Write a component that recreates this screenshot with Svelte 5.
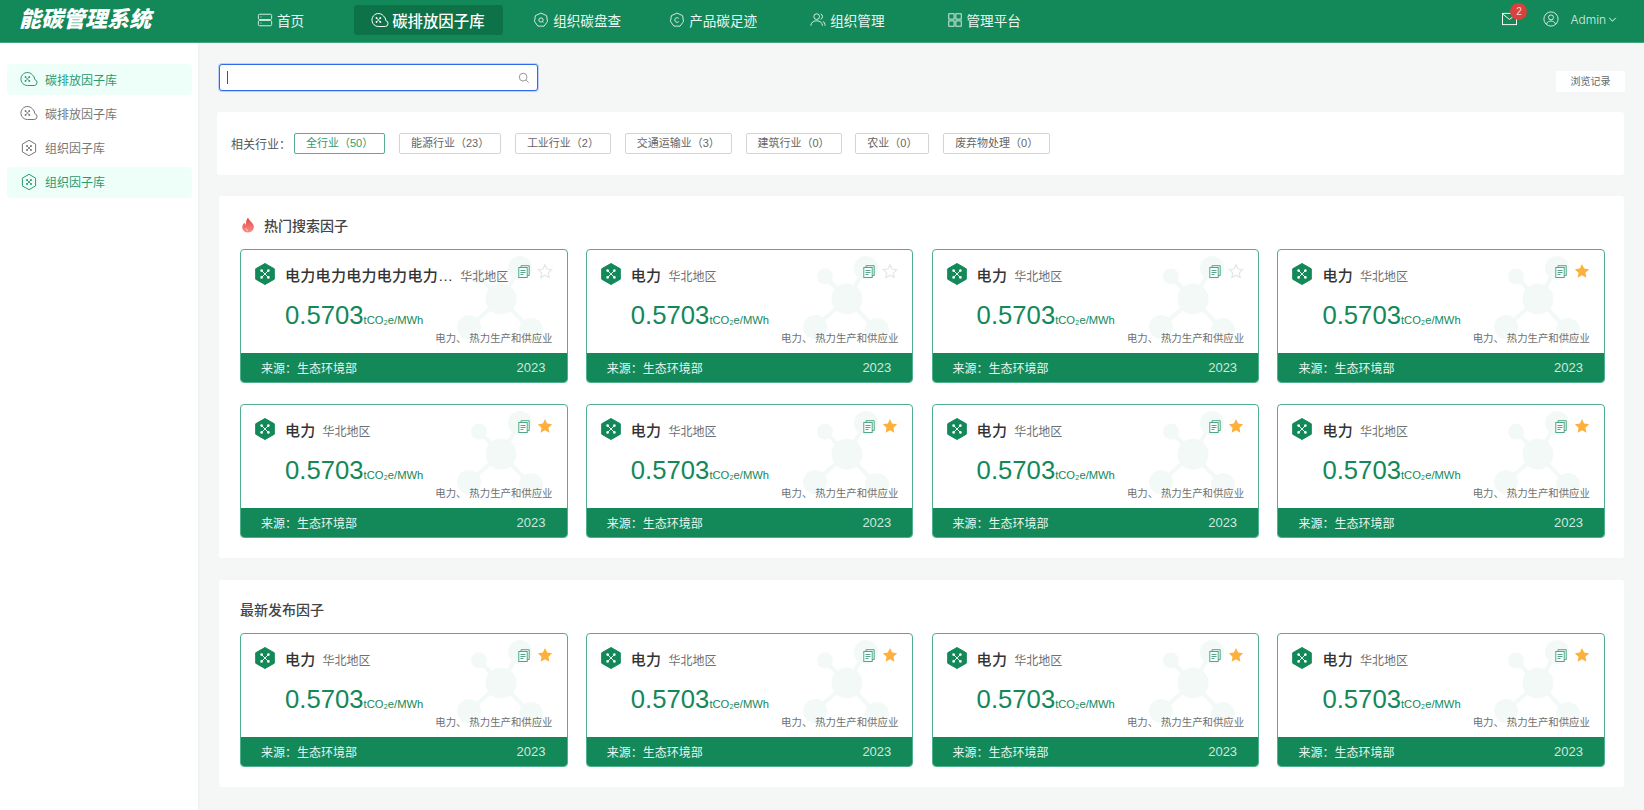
<script>
  const nav = [
    { label: '首页', icon: 'server' },
    { label: '碳排放因子库', icon: 'cloud', active: true },
    { label: '组织碳盘查', icon: 'hexq' },
    { label: '产品碳足迹', icon: 'hexc' },
    { label: '组织管理', icon: 'users' },
    { label: '管理平台', icon: 'grid' }
  ];
  const side = [
    { label: '碳排放因子库', icon: 'cloud', active: true },
    { label: '碳排放因子库', icon: 'cloud' },
    { label: '组织因子库', icon: 'hex' },
    { label: '组织因子库', icon: 'hex', active: true }
  ];
  const filters = ['全行业（50）', '能源行业（23）', '工业行业（2）', '交通运输业（3）', '建筑行业（0）', '农业（0）', '废弃物处理（0）'];
  const hot = [
    { title: '电力电力电力电力电力…', fav: false },
    { title: '电力', fav: false },
    { title: '电力', fav: false },
    { title: '电力', fav: true },
    { title: '电力', fav: true },
    { title: '电力', fav: true },
    { title: '电力', fav: true },
    { title: '电力', fav: true }
  ];
  const latest = [1, 2, 3, 4].map(() => ({ title: '电力', fav: true }));
</script>

{#snippet navIcon(name)}
  <svg class="ic" viewBox="0 0 18 18" fill="none" stroke="currentColor" stroke-width="1">
    {#if name === 'server'}
      <rect x="1.5" y="2.5" width="15" height="6" rx="1.5" /><rect x="1.5" y="9.5" width="15" height="6" rx="1.5" />
      <path d="M4 5.5h1M4 12.5h1" />
    {:else if name === 'cloud'}
      <path d="M12.400 4.800A6.500 6.500 0 1 0 7.500 15.500h6.700a3 3 0 0 0 .6-5.900 6.500 6.500 0 0 0-2.400-4.800z" />
      <path d="M5.500 7l3.800 4M9.300 7l-3.800 4" stroke-width=".8" />
      <circle cx="5.500" cy="7" r=".9" fill="currentColor" stroke="none" /><circle cx="9.300" cy="7" r=".9" fill="currentColor" stroke="none" /><circle cx="5.500" cy="11" r=".9" fill="currentColor" stroke="none" /><circle cx="9.300" cy="11" r=".9" fill="currentColor" stroke="none" />
    {:else if name === 'hex'}
      <path d="M9 1.300l6.600 3.800v7.800L9 16.700l-6.600-3.800V5.100z" stroke-linejoin="round" />
      <path d="M7 7l4 4M11 7l-4 4" stroke-width=".9" />
      <circle cx="7" cy="7" r="1" fill="currentColor" stroke="none" /><circle cx="11" cy="7" r="1" fill="currentColor" stroke="none" /><circle cx="7" cy="11" r="1" fill="currentColor" stroke="none" /><circle cx="11" cy="11" r="1" fill="currentColor" stroke="none" />
    {:else if name === 'hexq'}
      <path d="M9 1.200l6.300 2.900 1 6.500-3.800 5.300H5.500L1.700 10.600l1-6.500z" stroke-linejoin="round" />
      <circle cx="9" cy="9" r="2.400" /><path d="M10.600 10.600l1.200 1.200" />
    {:else if name === 'hexc'}
      <path d="M9 1.200l6.300 2.900 1 6.500-3.800 5.300H5.500L1.700 10.600l1-6.500z" stroke-linejoin="round" />
      <path d="M11 7.200a2.600 2.600 0 1 0 0 3.600" />
    {:else if name === 'users'}
      <circle cx="7.500" cy="5.200" r="3.200" /><path d="M1 15.500c0-3.600 2.800-5.600 6.500-5.600s6.500 2 6.500 5.600M12 2.200a3.200 3.200 0 0 1 0 6M14.500 10.500c1.500.8 2.500 2.500 2.500 5" />
    {:else if name === 'grid'}
      <rect x="2" y="2" width="6" height="6" /><rect x="10" y="2" width="6" height="6" /><rect x="2" y="10" width="6" height="6" /><rect x="10" y="10" width="6" height="6" />
    {/if}
  </svg>
{/snippet}

{#snippet card(c)}
  <article class="card">
    <div class="body">
      <svg class="mol" viewBox="0 0 110 100" fill="#f3f9f7" stroke="none">
        <path d="M29 26.500L51 49M70 18L51 49M19 77L51 49M81 80L51 49" stroke="#f3f9f7" stroke-width="4" />
        <circle cx="51" cy="49" r="15.500" /><circle cx="29" cy="26.500" r="8" /><circle cx="70" cy="18" r="12" /><circle cx="19" cy="77" r="12" /><circle cx="81" cy="80" r="12" />
      </svg>
      <div class="title-row">
        <svg class="hex" viewBox="0 0 20 22">
          <path d="M10 .5l9.300 5.300v10.400L10 21.500.7 16.200V5.800z" fill="#138859" stroke="#138859" stroke-linejoin="round" />
          <path d="M6.800 7.800l6.400 6.400M13.200 7.800l-6.400 6.400" stroke="#fff" stroke-width=".9" />
          <circle cx="6.600" cy="7.600" r="1.300" fill="#fff" /><circle cx="13.400" cy="7.600" r="1.300" fill="#fff" /><circle cx="6.600" cy="14.400" r="1.300" fill="#fff" /><circle cx="13.400" cy="14.400" r="1.300" fill="#fff" />
        </svg>
        <h3>{c.title}</h3>
        <span class="region">华北地区</span>
      </div>
      <div class="tools">
        <svg class="copy" viewBox="0 0 12 13" fill="none" stroke="#4fa784" stroke-width="1">
          <rect x=".8" y="2.500" width="8.400" height="10" fill="#fff" /><path d="M3 2.500V.7h8.200v9.800H9.200" /><path d="M2.500 5.500h5M2.500 7.500h5M2.500 9.500h3" />
        </svg>
        <svg class="star" viewBox="0 0 24 24">
          {#if c.fav}
            <path d="M12 1.500l3.200 6.900 7.500.9-5.500 5.200 1.400 7.500-6.600-3.700L5.400 22l1.400-7.500-5.500-5.200 7.500-.9z" fill="#fdb13c" />
          {:else}
            <path d="M12 2.500l3 6.500 7 .9-5.100 4.900 1.300 7-6.200-3.500-6.200 3.500 1.300-7L1.900 9.900l7-.9z" fill="#fff" stroke="#e6e6e6" stroke-width="1.800" />
          {/if}
        </svg>
      </div>
      <div class="value"><strong>0.5703</strong><span>tCO₂e/MWh</span></div>
      <p class="sector">电力、 热力生产和供应业</p>
    </div>
    <footer><span>来源：生态环境部</span><span class="year">2023</span></footer>
  </article>
{/snippet}

<div class="page">
  <header class="top">
    <div class="logo">能碳管理系统</div>
    <nav>
      {#each nav as n}
        <a class:on={n.active}>{@render navIcon(n.icon)}<span>{n.label}</span></a>
      {/each}
    </nav>
    <div class="user">
      <div class="mail">
        <svg viewBox="0 0 16 14" fill="none" stroke="#fff" stroke-width="1"><rect x=".5" y="1" width="15" height="12" /><path d="M.5 1.500L8 7.500l7.500-6" /></svg>
        <b>2</b>
      </div>
      <svg class="avatar" viewBox="0 0 18 18" fill="none" stroke="#e6f4ee" stroke-width="1"><circle cx="9" cy="9" r="8" /><circle cx="9" cy="7.200" r="2.800" /><path d="M3.800 14.800c1-2.500 3-3.500 5.200-3.500s4.200 1 5.200 3.500" /></svg>
      <span class="admin">Admin</span>
      <svg class="chev" viewBox="0 0 10 6" fill="none" stroke="#fff" stroke-width="1.200"><path d="M1 1l4 4 4-4" /></svg>
    </div>
  </header>

  <div class="layout">
    <aside>
      {#each side as s}
        <a class:on={s.active}>{@render navIcon(s.icon)}<span>{s.label}</span></a>
      {/each}
    </aside>

    <main>
      <div class="toolbar">
        <div class="search">
          <i class="caret"></i>
          <input aria-label="搜索" />
          <svg viewBox="0 0 14 14" fill="none" stroke="#888" stroke-width="1"><circle cx="6" cy="6" r="4.500" /><path d="M9.500 9.500l3 3" /></svg>
        </div>
        <button class="history">浏览记录</button>
      </div>

      <section class="filter">
        <span class="lbl">相关行业：</span>
        {#each filters as f, i}
          <button class:sel={i === 0}>{f}</button>
        {/each}
      </section>

      <section class="panel hot">
        <h2>
          <svg viewBox="0 0 14 16"><defs><linearGradient id="fl" x1="0" y1="0" x2="0" y2="1"><stop offset="0" stop-color="#e0483f" /><stop offset="1" stop-color="#fb8b8b" /></linearGradient></defs><path d="M7 .5c.8 3 4.200 4.500 5.500 7.500 1.300 3.800-1.500 7.500-5.500 7.500S.3 12 1.500 8.500c.5-1.300 1.300-2 2-2.800.2 1 .6 1.600 1.300 2C4.800 5 5.500 2.500 7 .5z" fill="url(#fl)" /><path d="M5 11.500c.2 1.200 1 1.800 2 1.900" stroke="#fff" fill="none" stroke-width=".8" /></svg>
          热门搜索因子
        </h2>
        <div class="grid">
          {#each hot as c}{@render card(c)}{/each}
        </div>
      </section>

      <section class="panel latest">
        <h2>最新发布因子</h2>
        <div class="grid">
          {#each latest as c}{@render card(c)}{/each}
        </div>
      </section>
    </main>
  </div>
</div>

<style>
  :global(body) { margin: 0; background: #f5f6f6; }
  .page { width: 1644px; height: 810px; overflow: hidden; font-family: "Liberation Sans", "Noto Sans CJK SC", sans-serif; color: #333; background: #f5f6f6; }
  .top { height: 43px; box-sizing: border-box; background: #138859; border-bottom: 1px solid #3fa67f; display: flex; align-items: flex-start; color: #fff; position: relative; }
  .logo { width: 236px; padding-left: 19px; box-sizing: border-box; font-size: 22px; line-height: 39px; font-weight: 900; font-style: italic; white-space: nowrap; }
  .top nav { display: flex; height: 42px; align-items: flex-start; }
  .top nav a { display: flex; align-items: center; height: 30px; margin-top: 5px; gap: 4px; font-size: 13.600px; color: #eaf6f1; border-radius: 3px; white-space: nowrap; }
  .top nav a .ic { width: 16px; height: 16px; flex: none; }
  .top nav a:nth-child(1) { margin-left: 21px; margin-right: 50px; }
  .top nav a.on { width: 149px; box-sizing: border-box; background: #0d7248; padding-left: 17px; gap: 3px; font-size: 15.400px; font-weight: 500; color: #fff; margin-right: 30px; }
  .top nav a.on .ic { width: 18px; height: 18px; }
  .top nav a:nth-child(3) { margin-right: 48px; }
  .top nav a:nth-child(4) { margin-right: 53px; }
  .top nav a:nth-child(5) { margin-right: 62px; }
  .user { margin-left: auto; display: flex; align-items: center; height: 38px; padding-right: 27px; }
  .mail { position: relative; width: 15px; height: 14px; margin-right: 26px; }
  .mail svg { width: 15px; height: 14px; display: block; }
  .mail b { position: absolute; left: 8px; top: -9px; width: 17px; height: 17px; border-radius: 50%; background: #d9413f; color: #ffd9d6; font: 400 10px/17px "Liberation Sans", sans-serif; text-align: center; }
  .avatar { width: 16px; height: 16px; margin-right: 11px; }
  .admin { font-family: Inter, "Liberation Sans", sans-serif; font-weight: 300; font-size: 12px; color: #d6efe4; }
  .chev { width: 9px; height: 5px; margin-left: 2px; }

  .layout { display: flex; height: 767px; }
  aside { width: 198px; flex: none; background: #fff; padding: 21px 6px 0 7px; box-sizing: border-box; display: flex; flex-direction: column; gap: 3.300px; box-shadow: 1px 0 2px rgba(0,0,0,.03); }
  aside a { height: 31px; border-radius: 4px; display: flex; align-items: center; padding: 0 0 1px 13px; box-sizing: border-box; gap: 7px; font-size: 12px; color: #777; }
  aside a.on { background: #eefffa; color: #2b9a6f; }
  aside a .ic { width: 18px; height: 18px; flex: none; }

  main { flex: 1; padding: 21px 20px 0 21px; box-sizing: border-box; min-width: 0; }
  .toolbar { display: flex; justify-content: space-between; align-items: flex-end; height: 27px; }
  .search { width: 319px; height: 27px; box-sizing: border-box; background: #fff; border: 1px solid #2f6bea; border-radius: 3px; box-shadow: 0 0 0 1px #bcd2fa; display: flex; align-items: center; padding: 0 7px; }
  .caret { width: 1px; height: 13px; background: #555; flex: none; }
  .search input { flex: 1; border: 0; outline: 0; background: transparent; min-width: 0; }
  .search svg { width: 12px; height: 12px; flex: none; }
  .history { width: 69px; height: 21px; border: 0; background: #fff; font: 10px/21px "Liberation Sans", "Noto Sans CJK SC", sans-serif; color: #666; border-radius: 2px; padding: 0; margin: 0 -1px -1px 0; }

  .filter { margin: 21px 0 0 -2px; height: 63px; background: #fff; border-radius: 3px; display: flex; align-items: center; padding-left: 14px; box-sizing: border-box; font-size: 12px; color: #555; }
  .lbl { width: 63px; flex: none; white-space: nowrap; }
  .filter button { height: 21px; padding: 0 11px; margin-right: 13.700px; border: 1px solid #d4d6d6; background: #fff; border-radius: 2px; font: 11px/19px "Liberation Sans", "Noto Sans CJK SC", sans-serif; color: #666; white-space: nowrap; flex: none; margin-top: -1px; }
  .filter button.sel { border-color: #58ad8b; color: #2f9a70; }

  .panel { background: #fff; border-radius: 3px; padding: 0 20px 0 21px; box-sizing: border-box; }
  .hot { margin-top: 21px; height: 362px; }
  .latest { margin-top: 22px; height: 207px; }
  h2 { margin: 0; height: 53px; display: flex; align-items: center; gap: 9px; font-size: 14px; font-weight: 500; color: #444; box-sizing: border-box; padding-top: 5px; }
  .hot h2 svg { width: 14px; height: 16px; margin-left: 1px; }
  .grid { display: grid; grid-template-columns: repeat(4, 327.500px); column-gap: 18.300px; row-gap: 21px; }

  .card { height: 134px; border: 1px solid #4fae8b; border-radius: 4px; overflow: hidden; box-sizing: border-box; display: flex; flex-direction: column; background: #fff; }
  .body { flex: 1; position: relative; padding: 13px 14px 0 14px; }
  .mol { position: absolute; left: 209px; top: 0; width: 110px; height: 100px; }
  .title-row { display: flex; align-items: center; position: relative; height: 22px; }
  .hex { width: 20px; height: 22px; flex: none; margin-right: 10px; }
  h3 { margin: 0; font-size: 15px; letter-spacing: .3px; font-weight: 500; color: #333; white-space: nowrap; }
  .region { font-size: 12px; color: #707070; margin-left: 7px; padding-top: 3px; white-space: nowrap; }
  .tools { position: absolute; top: 13px; right: 14px; display: flex; align-items: center; gap: 7px; }
  .copy { width: 12px; height: 13px; }
  .star { width: 16px; height: 16px; }
  .value { position: relative; margin: 15px 0 0 30px; display: flex; align-items: baseline; color: #138859; line-height: 30px; }
  .value strong { font-size: 25.700px; font-weight: 400; }
  .value span { font-size: 11.200px; }
  .sector { position: absolute; right: 14px; top: 82px; margin: 0; font-size: 10.400px; line-height: 14px; color: #707070; white-space: nowrap; }
  footer { height: 29px; flex: none; background: #138859; color: #e9f6f0; display: flex; justify-content: space-between; align-items: center; padding: 0 21px 0 20px; font-size: 12px; }
  .year { font-size: 13px; color: #cfe9dd; }
</style>
